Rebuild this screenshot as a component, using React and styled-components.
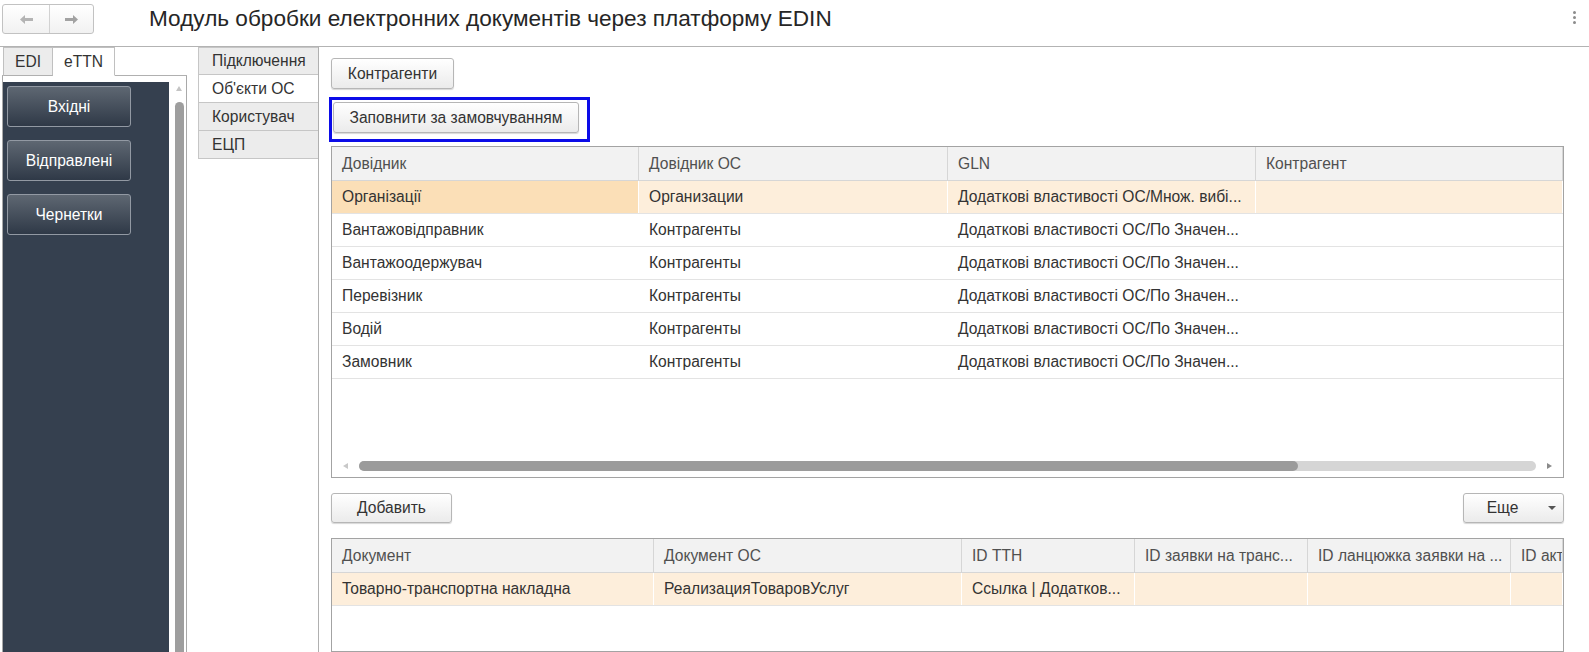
import React from "react";
import styled, { createGlobalStyle } from "styled-components";

const FS = "15.6px";

const GlobalStyle = createGlobalStyle`
  html, body { margin: 0; padding: 0; background: #fff; }
  body { font-family: "Liberation Sans", Arial, sans-serif; color: #333; }
  * { box-sizing: border-box; }
`;

const Page = styled.div`
  width: 100vw;
  height: 100vh;
  display: flex;
  flex-direction: column;
  overflow: hidden;
  font-family: "Liberation Sans", Arial, sans-serif;
`;

/* ---------- header ---------- */
const Header = styled.header`
  flex: none;
  height: 47px;
  display: flex;
  align-items: flex-start;
  border-bottom: 1px solid #b3b3b3;
`;

const NavGroup = styled.div`
  margin: 4px 0 0 2px;
  display: flex;
  height: 30px;
  border: 1px solid #c2c2c2;
  border-radius: 3px;
  background: linear-gradient(#ffffff, #f1f1f1);
`;

const NavButton = styled.div`
  width: ${(p) => p.$w}px;
  display: flex;
  align-items: center;
  justify-content: center;
  & + & { border-left: 1px solid #d2d2d2; }
`;

const Title = styled.h1`
  margin: 0 0 0 55px;
  font-weight: normal;
  font-size: 22.6px;
  line-height: 38px;
  color: #262626;
  white-space: nowrap;
`;

const Kebab = styled.div`
  margin: 11px 13px 0 auto;
  display: flex;
  flex-direction: column;
  gap: 2px;
  & span {
    width: 3px;
    height: 3px;
    border-radius: 50%;
    background: #8c8c8c;
  }
`;

/* ---------- body ---------- */
const Body = styled.div`
  flex: 1;
  min-height: 0;
  display: flex;
`;

const LeftPanel = styled.div`
  flex: none;
  width: 187px;
  padding-left: 2px;
  display: flex;
  flex-direction: column;
`;

const TabStrip = styled.div`
  flex: none;
  height: 29px;
  display: flex;
  &::after {
    content: "";
    flex: 1;
    border-bottom: 1px solid #b0b0b0;
  }
`;

const TabLead = styled.div`
  width: 1px;
  border-bottom: 1px solid #b0b0b0;
`;

const Tab = styled.div`
  height: 29px;
  padding: 0 ${(p) => p.$pad}px;
  display: flex;
  align-items: center;
  font-size: ${FS};
  color: #333;
  border: 1px solid #c0c0c0;
  border-bottom-color: ${(p) => (p.$active ? "#fff" : "#b0b0b0")};
  background: ${(p) => (p.$active ? "#fff" : "#ececec")};
  & + & { border-left: none; }
`;

const SidePanel = styled.div`
  flex: 1;
  min-height: 0;
  display: flex;
  border-left: 1px solid #a9a9a9;
  border-right: 1px solid #a9a9a9;
`;

const DarkArea = styled.div`
  flex: none;
  width: 166px;
  margin-top: 6px;
  background: #35404f;
  padding: 4px 0 0 4px;
  display: flex;
  flex-direction: column;
  gap: 13px;
`;

const SideButton = styled.button`
  width: 124px;
  height: 41px;
  border: 1px solid #9299a3;
  border-radius: 3px;
  background: linear-gradient(#5e6772, #2f3947);
  color: #fff;
  font: ${FS} "Liberation Sans", Arial, sans-serif;
  padding: 0;
`;

const VScroll = styled.div`
  flex: 1;
  display: flex;
  flex-direction: column;
  align-items: center;
  padding: 10px 0 0 3px;
`;

const ArrowUp = styled.div`
  width: 0;
  height: 0;
  border-left: 3px solid transparent;
  border-right: 3px solid transparent;
  border-bottom: 5px solid #c4c4c4;
`;

const VThumb = styled.div`
  margin-top: 11px;
  width: 9px;
  flex: 1;
  background: #9e9e9e;
  border-radius: 5px 5px 0 0;
`;

const VTabs = styled.div`
  flex: none;
  width: 120px;
  margin-left: 11px;
  display: flex;
  flex-direction: column;
`;

const VTab = styled.div`
  height: 28px;
  padding-left: 13px;
  display: flex;
  align-items: center;
  font-size: ${FS};
  color: #333;
  border: 1px solid #c6c6c6;
  border-right: none;
  background: ${(p) => (p.$active ? "#fff" : "#ececec")};
  & + & { border-top: none; }
`;

const Main = styled.main`
  flex: 1;
  min-width: 0;
  border-left: 1px solid #b0b0b0;
  padding: 11px 25px 0 12px;
  display: flex;
  flex-direction: column;
  align-items: flex-start;
`;

const Button = styled.button`
  flex: none;
  width: ${(p) => p.$w}px;
  height: ${(p) => p.$h || 31}px;
  padding: 0;
  border: 1px solid #b6b6b6;
  border-radius: 3px;
  background: linear-gradient(#ffffff, #ebebeb);
  box-shadow: 0 1px 1px rgba(0, 0, 0, 0.16);
  font: ${FS} "Liberation Sans", Arial, sans-serif;
  color: #333;
  display: flex;
  align-items: center;
  justify-content: center;
`;

const Highlight = styled.div`
  margin: 8px 0 0 -2px;
  border: 3px solid #0c0ce8;
  padding: 2px 8px 6px 1px;
`;

const Table = styled.div`
  align-self: stretch;
  flex: ${(p) => (p.$grow ? 1 : "none")};
  height: ${(p) => (p.$h ? `${p.$h}px` : "auto")};
  margin-top: ${(p) => p.$mt}px;
  border: 1px solid #a3a3a3;
  display: flex;
  flex-direction: column;
  overflow: hidden;
`;

const Row = styled.div`
  flex: none;
  display: grid;
  grid-template-columns: ${(p) => p.$cols};
  height: ${(p) => (p.$head ? 34 : 33)}px;
  border-bottom: 1px solid ${(p) => (p.$head ? "#d6d6d6" : "#e3e3e3")};
  background: ${(p) => (p.$head ? "#f2f2f2" : p.$sel ? "#fdeedb" : "#fff")};
`;

const Cell = styled.div`
  padding: 0 10px;
  display: flex;
  align-items: center;
  white-space: nowrap;
  overflow: hidden;
  font-size: ${FS};
  color: ${(p) => (p.$head ? "#505050" : "#333")};
  border-right: 1px solid ${(p) => (p.$head ? "#d6d6d6" : "#ffffff")};
  background: ${(p) => (p.$cur ? "#fbdfb7" : "transparent")};
`;

const Filler = styled.div`
  flex: 1;
`;

const HScroll = styled.div`
  flex: none;
  height: 18px;
  padding-bottom: 4px;
  display: flex;
  align-items: center;
`;

const ArrowSide = styled.div`
  width: ${(p) => p.$w}px;
  display: flex;
  justify-content: center;
  & span {
    width: 0;
    height: 0;
    border-top: 3px solid transparent;
    border-bottom: 3px solid transparent;
    ${(p) =>
      p.$dir === "left"
        ? "border-right: 5px solid #c8c8c8;"
        : "border-left: 5px solid #8a8a8a;"}
  }
`;

const Track = styled.div`
  flex: 1;
  height: 10px;
  border-radius: 5px;
  background: #d5d5d5;
  display: flex;
`;

const Thumb = styled.div`
  width: ${(p) => p.$pct}%;
  border-radius: 5px;
  background: #9b9b9b;
`;

const ButtonRow = styled.div`
  align-self: stretch;
  margin-top: 15px;
  display: flex;
  justify-content: space-between;
`;

const MoreLabel = styled.span`
  flex: 1;
  text-align: center;
`;

const MoreArrow = styled.span`
  width: 22px;
  display: flex;
  justify-content: center;
  &::before {
    content: "";
    border-left: 4px solid transparent;
    border-right: 4px solid transparent;
    border-top: 4px solid #555;
  }
`;

const ArrowIcon = ({ dir, color }) => (
  <svg width="13" height="9" viewBox="0 0 13 9">
    <path
      d={dir === "left" ? "M0 4.5 L5 0 L5 3 L13 3 L13 6 L5 6 L5 9 Z" : "M13 4.5 L8 0 L8 3 L0 3 L0 6 L8 6 L8 9 Z"}
      fill={color}
    />
  </svg>
);

const cols1 = "307px 309px 308px 1fr";
const rows1 = [
  ["Організації", "Организации", "Додаткові властивості ОС/Множ. вибі...", ""],
  ["Вантажовідправник", "Контрагенты", "Додаткові властивості ОС/По Значен...", ""],
  ["Вантажоодержувач", "Контрагенты", "Додаткові властивості ОС/По Значен...", ""],
  ["Перевізник", "Контрагенты", "Додаткові властивості ОС/По Значен...", ""],
  ["Водій", "Контрагенты", "Додаткові властивості ОС/По Значен...", ""],
  ["Замовник", "Контрагенты", "Додаткові властивості ОС/По Значен...", ""],
];

const cols2 = "322px 308px 173px 173px 203px 1fr";
const head2 = ["Документ", "Документ ОС", "ID ТТН", "ID заявки на транс...", "ID ланцюжка заявки на ...", "ID акту"];

export default function App() {
  return (
    <Page>
      <GlobalStyle />
      <Header>
        <NavGroup>
          <NavButton $w={46}>
            <ArrowIcon dir="left" color="#b4b4b4" />
          </NavButton>
          <NavButton $w={44}>
            <ArrowIcon dir="right" color="#a2a2a2" />
          </NavButton>
        </NavGroup>
        <Title>Модуль обробки електронних документів через платформу EDIN</Title>
        <Kebab>
          <span />
          <span />
          <span />
        </Kebab>
      </Header>

      <Body>
        <LeftPanel>
          <TabStrip>
            <TabLead />
            <Tab $pad={11}>EDI</Tab>
            <Tab $pad={11} $active>
              eTTN
            </Tab>
          </TabStrip>
          <SidePanel>
            <DarkArea>
              <SideButton>Вхідні</SideButton>
              <SideButton>Відправлені</SideButton>
              <SideButton>Чернетки</SideButton>
            </DarkArea>
            <VScroll>
              <ArrowUp />
              <VThumb />
            </VScroll>
          </SidePanel>
        </LeftPanel>

        <VTabs>
          <VTab>Підключення</VTab>
          <VTab $active>Об'єкти ОС</VTab>
          <VTab>Користувач</VTab>
          <VTab>ЕЦП</VTab>
        </VTabs>

        <Main>
          <Button $w={123}>Контрагенти</Button>
          <Highlight>
            <Button $w={246}>Заповнити за замовчуванням</Button>
          </Highlight>

          <Table $mt={4} $h={332}>
            <Row $head $cols={cols1}>
              <Cell $head>Довідник</Cell>
              <Cell $head>Довідник ОС</Cell>
              <Cell $head>GLN</Cell>
              <Cell $head>Контрагент</Cell>
            </Row>
            {rows1.map((r, i) => (
              <Row key={i} $cols={cols1} $sel={i === 0}>
                {r.map((c, j) => (
                  <Cell key={j} $cur={i === 0 && j === 0}>
                    {c}
                  </Cell>
                ))}
              </Row>
            ))}
            <Filler />
            <HScroll>
              <ArrowSide $w={27} $dir="left">
                <span />
              </ArrowSide>
              <Track>
                <Thumb $pct={79.8} />
              </Track>
              <ArrowSide $w={27} $dir="right">
                <span />
              </ArrowSide>
            </HScroll>
          </Table>

          <ButtonRow>
            <Button $w={121} $h={30}>
              Добавить
            </Button>
            <Button $w={101} $h={30}>
              <MoreLabel>Еще</MoreLabel>
              <MoreArrow />
            </Button>
          </ButtonRow>

          <Table $mt={15} $grow>
            <Row $head $cols={cols2}>
              {head2.map((h) => (
                <Cell key={h} $head>
                  {h}
                </Cell>
              ))}
            </Row>
            <Row $cols={cols2} $sel>
              <Cell>Товарно-транспортна накладна</Cell>
              <Cell>РеализацияТоваровУслуг</Cell>
              <Cell>Ссылка | Додатков...</Cell>
              <Cell />
              <Cell />
              <Cell />
            </Row>
          </Table>
        </Main>
      </Body>
    </Page>
  );
}
